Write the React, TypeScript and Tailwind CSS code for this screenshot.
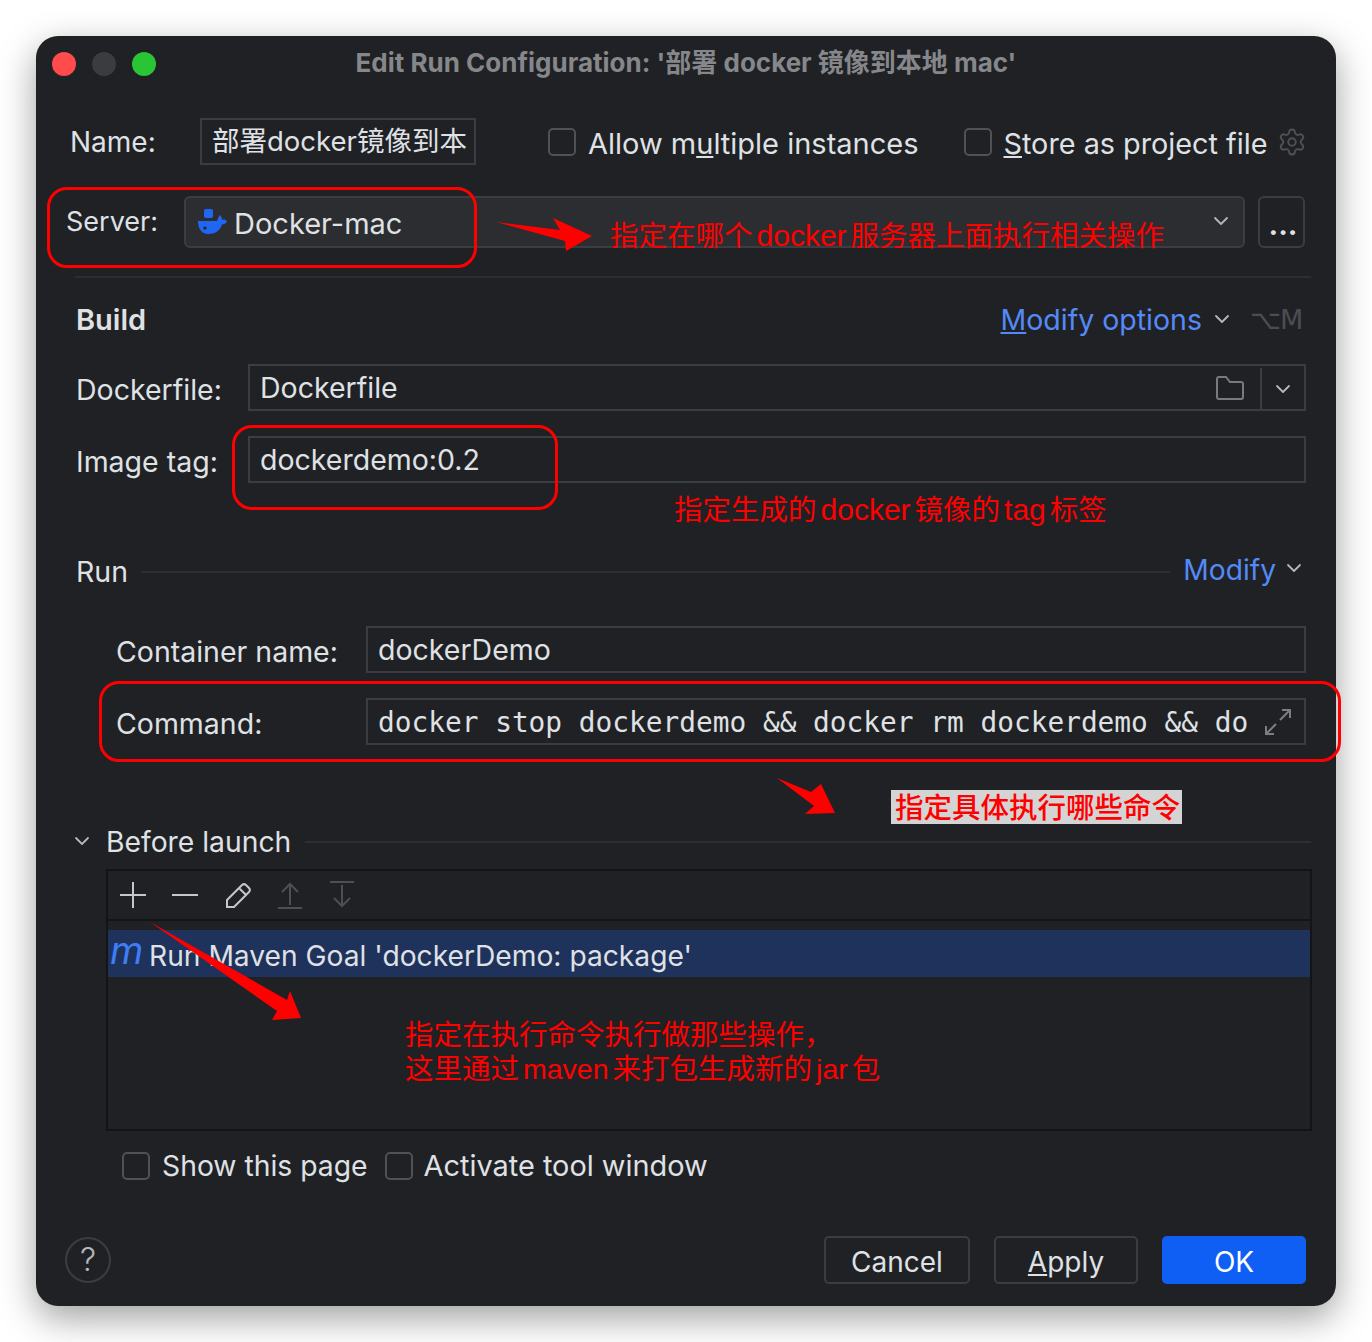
import React from "react";
import { ChevronDown, Settings } from "lucide-react";

const ui = "font-['Inter','Noto_Sans_CJK_SC',sans-serif]";
const note = "font-['Liberation_Sans','Noto_Sans_CJK_SC',sans-serif]";

function Checkbox() {
  return <span className="block w-[28px] h-[28px] rounded-[5px] border-2 border-[#4e5157] bg-[#202124] shrink-0" />;
}

function DockerIcon() {
  return (
    <svg width="30" height="26" viewBox="0 0 30 26" className="shrink-0">
      <rect x="6" y="0" width="9" height="9" rx="2" fill="#1f66f2" />
      <path d="M0 12 H19 C20 9 21 7 22 6 C24 8 24 10 24 11 C26 10 28 11 29 12 C28 15 26 15 24 15.500 C22 22 17 25 10 25 C4 25 0 20 0 12 Z" fill="#1f66f2" />
      <circle cx="7" cy="19" r="1.600" fill="#202124" />
    </svg>
  );
}

function FolderIcon() {
  return (
    <svg width="30" height="26" viewBox="0 0 30 26" fill="none" stroke="#777a80" strokeWidth="2">
      <path d="M2 4 a2 2 0 0 1 2-2 h7 l4 5 h11 a2 2 0 0 1 2 2 v13 a2 2 0 0 1-2 2 h-22 a2 2 0 0 1-2-2 z" />
    </svg>
  );
}

function TextField({ className, children }: { className?: string; children: React.ReactNode }) {
  return (
    <div className={`h-[47px] border-2 border-[#3b3d43] flex items-center pl-[10px] overflow-hidden whitespace-nowrap ${className ?? ""}`}>
      {children}
    </div>
  );
}

function ToolIcon({ children }: { children: React.ReactNode }) {
  return <svg width="30" height="30" viewBox="0 0 30 30" fill="none" strokeWidth="2" className="shrink-0">{children}</svg>;
}

function Toolbar() {
  return (
    <div className="h-[50px] border-b-2 border-[#131416] flex items-center pl-[10px] gap-[22px]">
      <ToolIcon><path d="M15 2 V28 M2 15 H28" stroke="#c5c7cc" /></ToolIcon>
      <ToolIcon><path d="M2 15 H28" stroke="#c5c7cc" /></ToolIcon>
      <ToolIcon>
        <path d="M5 27 V20 L20 5 a3 3 0 0 1 4 0 l3 3 a3 3 0 0 1 0 4 L12 27 Z M17 8 L24 15" stroke="#c5c7cc" />
      </ToolIcon>
      <ToolIcon><path d="M16 25 V5 M8 12 L16 4 L24 12 M4 28 H28" stroke="#4d4f55" /></ToolIcon>
      <ToolIcon><path d="M16 5 V25 M8 18 L16 26 L24 18 M4 2 H28" stroke="#4d4f55" /></ToolIcon>
    </div>
  );
}

function Latin({ big, children }: { big?: boolean; children: React.ReactNode }) {
  return <span className={big ? "text-[30px] mx-[4px]" : "text-[28.500px] mx-[4px]"}>{children}</span>;
}

function Annotations() {
  return (
    <>
      <div className="absolute left-[47px] top-[187px] w-[430px] h-[81px] rounded-[20px] border-[3px] border-[#ff0000]" />
      <div className="absolute left-[232px] top-[425px] w-[326px] h-[85px] rounded-[20px] border-[3px] border-[#ff0000]" />
      <div className="absolute left-[99px] top-[681px] w-[1242px] h-[81px] rounded-[20px] border-[3px] border-[#ff0000]" />
      <svg className="absolute left-0 top-0" width="1372" height="1342" fill="#ff0000">
        <polygon points="496,222 560,230 553,218 592,236 566,251 565,241" />
        <polygon points="777,778 811,792 821,784 835,813 805,814 814,806" />
        <polygon points="150,922 287,1000 290,991 301,1018 272,1020 277,1011" />
      </svg>
      <p className={`absolute left-[610px] top-[217px] text-[28.500px] leading-[38px] text-[#ff0000] whitespace-nowrap ${note}`}>
        指定在哪个<Latin big>docker</Latin>服务器上面执行相关操作
      </p>
      <p className={`absolute left-[674px] top-[491px] text-[28.500px] leading-[38px] text-[#ff0000] whitespace-nowrap ${note}`}>
        指定生成的<Latin big>docker</Latin>镜像的<Latin big>tag</Latin>标签
      </p>
      <p className={`absolute left-[891px] top-[790px] w-[291px] h-[34px] bg-[#d4d4d4] pl-[4px] text-[28.500px] leading-[36px] font-medium text-[#ff0000] whitespace-nowrap ${note}`}>
        指定具体执行哪些命令
      </p>
      <p className={`absolute left-[405px] top-[1018px] text-[28.500px] leading-[34px] text-[#ff0000] whitespace-nowrap ${note}`}>
        指定在执行命令执行做那些操作，
        <br />
        这里通过<Latin>maven</Latin>来打包生成新的<Latin>jar</Latin>包
      </p>
    </>
  );
}

export default function App() {
  return (
    <div className={`relative w-[1372px] h-[1342px] bg-white overflow-hidden pt-[36px] pl-[36px] text-[29px] text-[#dfe1e5] ${ui}`}>
      <div className="w-[1300px] h-[1270px] rounded-[22px] bg-[#202124] shadow-[0_12px_36px_rgba(0,0,0,0.38)]">
        {/* Title bar */}
        <div className="relative h-[54px] flex items-center justify-center">
          <div className="absolute left-[16px] top-[16px] flex gap-[16px]">
            <span className="w-[24px] h-[24px] rounded-full bg-[#ff4b4b]" />
            <span className="w-[24px] h-[24px] rounded-full bg-[#3b3c3f]" />
            <span className="w-[24px] h-[24px] rounded-full bg-[#28c534]" />
          </div>
          <span className="text-[26px] font-bold text-[#85878b] whitespace-nowrap pb-[2px]">
            Edit Run Configuration: '部署 docker 镜像到本地 mac'
          </span>
        </div>

        {/* Name */}
        <div className="mt-[28px] h-[47px] flex items-center pl-[34px]">
          <span className="w-[130px] shrink-0 text-[28px]">Name:</span>
          <TextField className="w-[276px] shrink-0 text-[27.500px]">部署docker镜像到本</TextField>
          <span className="ml-[72px]"><Checkbox /></span>
          <span className="ml-[12px] mt-[4px] whitespace-nowrap">Allow m<u>u</u>ltiple instances</span>
          <span className="ml-[46px]"><Checkbox /></span>
          <span className="ml-[11px] mt-[4px] whitespace-nowrap text-[28.800px]"><u>S</u>tore as project file</span>
          <Settings size={30} strokeWidth={1.500} className="ml-[9px] text-[#4f5157]" />
        </div>

        {/* Server */}
        <div className="mt-[31px] h-[52px] flex items-center pl-[30px] pr-[31px]">
          <span className="w-[118px] shrink-0 text-[27px]">Server:</span>
          <div className="flex-1 h-full rounded-[6px] border-2 border-[#3b3d43] bg-[#2b2d30] flex items-center pl-[12px] pr-[10px] gap-[6px]">
            <DockerIcon />
            <span className="mt-[3px]">Docker-mac</span>
            <ChevronDown size={24} strokeWidth={1.800} className="ml-auto -mt-[2px] text-[#b4b6ba]" />
          </div>
          <div className="ml-[13px] w-[47px] h-full rounded-[6px] border-2 border-[#3b3d43] flex items-center justify-center font-bold pt-[6px] pl-[3px]">...</div>
        </div>

        <div className="mt-[28px] ml-[39px] mr-[25px] h-[2px] bg-[#2c2e32]" />

        {/* Build */}
        <div className="mt-[22px] h-[40px] flex items-center pl-[40px] pr-[36px]">
          <span className="font-semibold text-[29px]">Build</span>
          <span className="ml-auto text-[#548af7] text-[28.500px]"><u>M</u>odify options</span>
          <ChevronDown size={24} strokeWidth={1.800} className="ml-[8px] -mt-[2px] text-[#b4b6ba]" />
          <span className="ml-[16px] w-[50px] text-[#4b4d53] font-['DejaVu_Sans',sans-serif] text-[27px] tracking-[-1px] whitespace-nowrap">⌥M</span>
        </div>

        <div className="mt-[24px] h-[47px] flex items-center pl-[40px] pr-[30px]">
          <span className="w-[172px] shrink-0 text-[28.500px] mt-[5px]">Dockerfile:</span>
          <TextField className="flex-1 !pr-0 text-[28.500px] pt-[2px]">
            Dockerfile
            <span className="ml-auto mr-[15px] flex items-center -mt-[2px]"><FolderIcon /></span>
            <span className="w-[44px] h-full border-l-2 border-[#3b3d43] flex items-center justify-center shrink-0">
              <ChevronDown size={24} strokeWidth={1.800} className="text-[#b4b6ba]" />
            </span>
          </TextField>
        </div>

        <div className="mt-[25px] h-[47px] flex items-center pl-[40px] pr-[30px]">
          <span className="w-[172px] shrink-0 text-[28.500px] mt-[5px]">Image tag:</span>
          <TextField className="flex-1 text-[28.500px] pt-[2px]">dockerdemo:0.2</TextField>
        </div>

        {/* Run */}
        <div className="mt-[69px] h-[40px] flex items-center pl-[40px] pr-[30px]">
          <span className="text-[28.500px] mt-[1px]">Run</span>
          <span className="ml-[13px] flex-1 h-[2px] bg-[#2c2e32]" />
          <span className="ml-[13px] text-[#548af7] -mt-[4px] text-[28.200px]">Modify</span>
          <ChevronDown size={24} strokeWidth={1.800} className="ml-[6px] -mt-[8px] text-[#b4b6ba]" />
        </div>

        <div className="mt-[34px] h-[47px] flex items-center pl-[80px] pr-[30px]">
          <span className="w-[250px] shrink-0 text-[28.500px] mt-[5px]">Container name:</span>
          <TextField className="flex-1 text-[28.500px] pt-[2px]">dockerDemo</TextField>
        </div>

        <div className="mt-[25px] h-[47px] flex items-center pl-[80px] pr-[30px]">
          <span className="w-[250px] shrink-0 text-[28.500px] mt-[5px]">Command:</span>
          <TextField className="flex-1 !pr-[12px] font-['DejaVu_Sans_Mono',monospace] text-[27.800px] pt-[2px]">
            <span className="shrink-0">docker stop dockerdemo && docker rm dockerdemo && do</span>
            <svg width="28" height="28" viewBox="0 0 28 28" fill="none" stroke="#7b7e84" strokeWidth="2" className="ml-auto shrink-0 -mt-[2px]">
              <path d="M16 12 L26 2 M18 2 H26 V10 M12 16 L2 26 M2 18 V26 H10" />
            </svg>
          </TextField>
        </div>

        {/* Before launch */}
        <div className="mt-[77px] h-[40px] flex items-center pl-[34px] pr-[25px]">
          <ChevronDown size={24} strokeWidth={1.800} className="-mt-[2px] text-[#b4b6ba]" />
          <span className="ml-[12px] text-[28.300px]">Before launch</span>
          <span className="ml-[14px] flex-1 h-[2px] bg-[#2c2e32]" />
        </div>

        <div className="mt-[7px] ml-[70px] mr-[24px] h-[262px] border-2 border-[#131416]">
          <Toolbar />
          <div className="mt-[9px] h-[47px] bg-[#1f325c] flex items-center whitespace-nowrap">
            <span className="w-[41px] text-[38px] leading-none italic text-[#3f7df5] pl-[2px] -mt-[8px]">m</span>
            <span className="text-[28.200px] mt-[6px]">Run Maven Goal 'dockerDemo: package'</span>
          </div>
        </div>

        <div className="mt-[20px] h-[30px] flex items-center pl-[86px]">
          <Checkbox />
          <span className="ml-[12px] text-[28.300px]">Show this page</span>
          <span className="ml-[17px]"><Checkbox /></span>
          <span className="ml-[11px] text-[28.900px]">Activate tool window</span>
        </div>

        {/* Footer */}
        <div className="mt-[55px] h-[48px] flex items-center pl-[29px] pr-[30px]">
          <span className="w-[46px] h-[46px] rounded-full border-2 border-[#3b3d43] flex items-center justify-center text-[32px] font-light text-[#b4b6ba]">?</span>
          <button className="ml-auto w-[146px] h-full rounded-[5px] border-2 border-[#3b3d43] text-[28px] pt-[3px]">Cancel</button>
          <button className="ml-[24px] w-[144px] h-full rounded-[5px] border-2 border-[#3b3d43] text-[28px] pt-[3px]"><u>A</u>pply</button>
          <button className="ml-[24px] w-[144px] h-full rounded-[5px] bg-[#0f5ff5] text-white text-[28px] pt-[3px]">OK</button>
        </div>
      </div>
      <Annotations />
    </div>
  );
}
